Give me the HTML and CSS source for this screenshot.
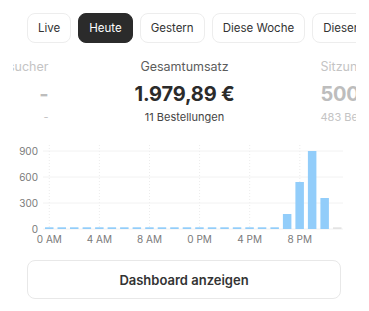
FILE: index.html
```html
<!DOCTYPE html>
<html lang="de">
<head>
    <meta charset="UTF-8">
    <meta name="viewport" content="width=device-width, initial-scale=1.0">
    <title>Umsatz heute</title>
    <link rel="stylesheet" href="styles.css">
</head>
<body>
    <div class="panel">
        <div class="tabs">
            <button class="tab">Live</button>
            <button class="tab active">Heute</button>
            <button class="tab">Gestern</button>
            <button class="tab">Diese Woche</button>
            <button class="tab">Diesen Monat</button>
        </div>

        <div class="stats">
            <div class="stat side left">
                <div class="stat-label">Besucher</div>
                <div class="stat-value">-</div>
                <div class="stat-sub">-</div>
            </div>
            <div class="stat">
                <div class="stat-label">Gesamtumsatz</div>
                <div class="stat-value">1.979,89 €</div>
                <div class="stat-sub">11 Bestellungen</div>
            </div>
            <div class="stat side right">
                <div class="stat-label">Sitzungen</div>
                <div class="stat-value">500</div>
                <div class="stat-sub">483 Besucher</div>
            </div>
        </div>

        <svg class="chart" width="343" height="110" viewBox="0 0 343 110">
            <!-- vertical hour marks -->
            <g class="vgrid">
                <line x1="36.3" y1="6" x2="36.3" y2="90"/>
                <line x1="86.4" y1="6" x2="86.4" y2="90"/>
                <line x1="136.5" y1="6" x2="136.5" y2="90"/>
                <line x1="186.6" y1="6" x2="186.6" y2="90"/>
                <line x1="236.7" y1="6" x2="236.7" y2="90"/>
                <line x1="286.8" y1="6" x2="286.8" y2="90"/>
            </g>
            <g class="hgrid">
                <line x1="30" y1="12" x2="330" y2="12"/>
                <line x1="30" y1="38" x2="330" y2="38"/>
                <line x1="30" y1="64" x2="330" y2="64"/>
                <line x1="30" y1="90" x2="330" y2="90"/>
            </g>
            <g class="ylabels">
                <text x="25" y="15.6">900</text>
                <text x="25" y="41.6">600</text>
                <text x="25" y="67.6">300</text>
                <text x="25" y="93.6">0</text>
            </g>
            <g class="bars">
                <rect x="32.0" y="88.3" width="8.5" height="1.7"/>
                <rect x="44.5" y="88.3" width="8.5" height="1.7"/>
                <rect x="57.0" y="88.3" width="8.5" height="1.7"/>
                <rect x="69.6" y="88.3" width="8.5" height="1.7"/>
                <rect x="82.1" y="88.3" width="8.5" height="1.7"/>
                <rect x="94.6" y="88.3" width="8.5" height="1.7"/>
                <rect x="107.1" y="88.3" width="8.5" height="1.7"/>
                <rect x="119.6" y="88.3" width="8.5" height="1.7"/>
                <rect x="132.2" y="88.3" width="8.5" height="1.7"/>
                <rect x="144.7" y="88.3" width="8.5" height="1.7"/>
                <rect x="157.2" y="88.3" width="8.5" height="1.7"/>
                <rect x="169.7" y="88.3" width="8.5" height="1.7"/>
                <rect x="182.2" y="88.3" width="8.5" height="1.7"/>
                <rect x="194.8" y="88.3" width="8.5" height="1.7"/>
                <rect x="207.3" y="88.3" width="8.5" height="1.7"/>
                <rect x="219.8" y="88.3" width="8.5" height="1.7"/>
                <rect x="232.3" y="88.3" width="8.5" height="1.7"/>
                <rect x="244.8" y="88.3" width="8.5" height="1.7"/>
                <rect x="257.4" y="88.3" width="8.5" height="1.7"/>
                <rect x="269.9" y="75" width="8.5" height="15"/>
                <rect x="282.4" y="43" width="8.5" height="47"/>
                <rect x="294.9" y="12" width="8.5" height="78"/>
                <rect x="307.4" y="59" width="8.5" height="31"/>
                <rect class="empty" x="320.0" y="88.3" width="8.5" height="1.7"/>
            </g>
            <g class="xlabels">
                <text x="36.3" y="103.6">0 AM</text>
                <text x="86.4" y="103.6">4 AM</text>
                <text x="136.5" y="103.6">8 AM</text>
                <text x="186.6" y="103.6">0 PM</text>
                <text x="236.7" y="103.6">4 PM</text>
                <text x="286.8" y="103.6">8 PM</text>
            </g>
        </svg>

        <button class="dashboard-btn">Dashboard anzeigen</button>
    </div>
</body>
</html>
```

FILE: styles.css
```css
body {
    margin: 0;
    font-family: Inter, "Noto Sans", Arial, sans-serif;
    background-color: #fff;
    color: #2b2b2b;
}
.panel {
    margin: 0 13px;
    padding-top: 13px;
    overflow: hidden;
}
.tabs {
    display: flex;
    gap: 7px;
    padding-left: 14px;
    white-space: nowrap;
}
.tab {
    flex: none;
    height: 30px;
    padding: 0 10px;
    font-family: inherit;
    font-size: 11.5px;
    color: #333;
    background-color: #fff;
    border: 1px solid #ededed;
    border-radius: 8px;
}
.tab.active {
    background-color: #2b2b2b;
    border-color: #2b2b2b;
    color: #fff;
}
.stats {
    display: grid;
    grid-template-columns: 120px 272px 120px;
    justify-content: center;
    margin-top: 16px;
    white-space: nowrap;
}
.stat {
    text-align: center;
}
.stat.left {
    text-align: right;
}
.stat.right {
    text-align: left;
}
.stat-label {
    font-size: 12.5px;
    line-height: 16px;
    color: #5c5c5c;
}
.stat-value {
    margin-top: 6px;
    font-size: 20px;
    line-height: 26px;
    font-weight: 700;
    letter-spacing: -0.2px;
    color: #2b2b2b;
}
.stat-sub {
    margin-top: 3px;
    font-size: 11px;
    line-height: 14px;
    color: #444;
}
.stat.side .stat-label,
.stat.side .stat-sub {
    color: #c4c4c4;
}
.stat.side .stat-value {
    color: #bdbdbd;
}
.chart {
    display: block;
    margin-top: 15px;
}
.chart text {
    font-family: Inter, "Noto Sans", Arial, sans-serif;
    font-size: 10px;
    fill: #7a7a7a;
}
.ylabels text {
    text-anchor: end;
}
.xlabels text {
    text-anchor: middle;
}
.hgrid line {
    stroke: #f2f2f2;
    stroke-width: 1;
}
.vgrid line {
    stroke: #ececec;
    stroke-width: 1;
    stroke-dasharray: 1 2;
}
.bars rect {
    fill: #92cdfa;
}
.bars rect.empty {
    fill: #e3e3e3;
}
.dashboard-btn {
    display: block;
    width: 314px;
    height: 39px;
    margin: 11px 0 0 14px;
    font-family: inherit;
    font-size: 13px;
    font-weight: 600;
    color: #333;
    background-color: #fff;
    border: 1px solid #e8e8e8;
    border-radius: 8px;
}
```
